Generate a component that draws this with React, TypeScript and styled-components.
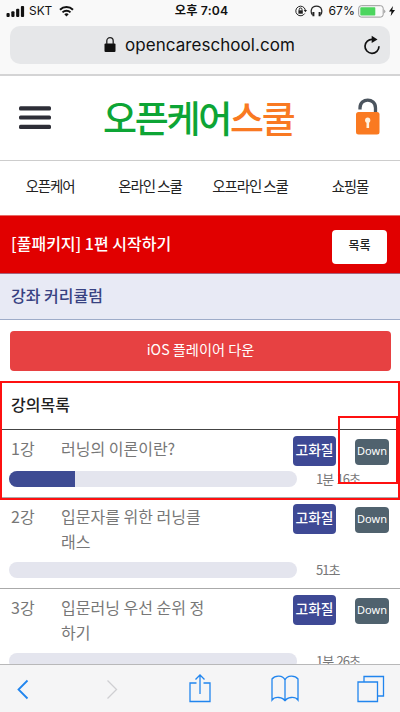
import React from 'react';
import styled, { createGlobalStyle } from 'styled-components';

const Global = createGlobalStyle`
  * { box-sizing: border-box; }
  body { margin: 0; background: #fff; font-family: "Noto Sans CJK KR", "Noto Sans", sans-serif; }
`;

const Screen = styled.div`
  width: 400px;
  height: 712px;
  display: flex;
  flex-direction: column;
  overflow: hidden;
  background: #fff;
`;

const StatusBar = styled.div`
  height: 22px;
  flex: none;
  display: grid;
  grid-template-columns: 1fr auto 1fr;
  align-items: center;
  padding: 0 5px 0 6px;
  background: #f9f9f9;
  color: #111;
  font: 400 11.4px/22px Inter, "Noto Sans CJK KR", sans-serif;
`;

const StatusGroup = styled.div<{ $end?: boolean }>`
  display: flex;
  align-items: center;
  gap: ${(p) => (p.$end ? 3 : 4)}px;
  justify-content: ${(p) => (p.$end ? 'flex-end' : 'flex-start')};
  svg { display: block; flex: none; }
`;

const Carrier = styled.span`
  margin-right: 3px;
  font-size: 11.9px;
`;

const Percent = styled.span`
  margin-left: 3px;
  font-size: 12.2px;
`;

const Clock = styled.div`
  font-weight: 600;
  font-size: 12.2px;
  letter-spacing: 0.2px;
  padding-left: 2px;
`;

const AddressBar = styled.div`
  height: 54px;
  flex: none;
  padding: 4px 10px 0;
  background: #f9f9f9;
  border-bottom: 2px solid #d4d4d5;
`;

const AddressField = styled.div`
  height: 38px;
  display: flex;
  align-items: center;
  padding: 0 9px 0 94px;
  border-radius: 10px;
  background: #e6e7e9;
  svg { display: block; flex: none; }
`;

const Address = styled.span`
  flex: 1;
  margin-left: 9px;
  color: #111;
  font: 400 17px/38px Inter, sans-serif;
  letter-spacing: 0.05px;
`;

const SiteHeader = styled.header`
  height: 85px;
  flex: none;
  display: flex;
  align-items: center;
  padding: 0 20px 0 19px;
  border-bottom: 1px solid #cdcdcd;
  svg { display: block; flex: none; }
`;

const Logo = styled.h1`
  margin: 0 auto 3px 52px;
  font-size: 37px;
  line-height: 60px;
  font-weight: 500;
  letter-spacing: -2.3px;
  color: #0da535;
  white-space: nowrap;
`;

const LogoAccent = styled.span`
  color: #f97922;
`;

const Nav = styled.nav`
  height: 54px;
  flex: none;
  display: grid;
  grid-template-columns: repeat(4, 100px);
  line-height: 50px;
  font-size: 14.5px;
  letter-spacing: -1.1px;
  text-align: center;
  color: #222;
  white-space: nowrap;
`;

const TitleBar = styled.div`
  height: 59px;
  flex: none;
  display: flex;
  align-items: center;
  justify-content: space-between;
  padding: 4px 13px 0 11px;
  background: #e10000;
  border-top: 1px solid #e86a66;
  border-bottom: 1px solid #a5637c;
  color: #fff;
`;

const CourseTitle = styled.h2`
  margin: 0 0 7px;
  font-size: 16px;
  line-height: 24px;
  font-weight: 500;
  letter-spacing: 0;
`;

const ListButton = styled.button`
  width: 55px;
  height: 34px;
  padding: 0 0 3px;
  border: 0;
  border-radius: 4px;
  background: #fff;
  color: #222;
  font: 500 12px/30px "Noto Sans CJK KR", sans-serif;
`;

const SectionTitle = styled.h3`
  margin: 0;
  height: 46px;
  flex: none;
  padding: 0 11px;
  background: #e8eaf5;
  border-bottom: 1px solid #9eacc9;
  color: #384282;
  font-size: 16px;
  font-weight: 500;
  line-height: 43px;
`;

const PlayerButton = styled.button`
  margin: 11px 9px 10px 10px;
  height: 40px;
  flex: none;
  border: 0;
  border-radius: 4px;
  padding: 0 0 4px;
  background: #e74142;
  color: #fff;
  font: 400 14.2px/36px "Noto Sans CJK KR", sans-serif;
`;

const Lessons = styled.section`
  position: relative;
  flex: 1;
  min-height: 0;
  overflow: hidden;
`;

const Highlight = styled.div`
  position: absolute;
  top: 0;
  left: 0;
  width: 400px;
  height: 119px;
  border: 2px solid #fe1010;
`;

const DownHighlight = styled(Highlight)`
  top: 35px;
  left: 338px;
  width: 60px;
  height: 68px;
`;

const ListHeading = styled.h3`
  margin: 0;
  height: 49px;
  padding: 0 11px;
  border-bottom: 1px solid #444;
  color: #222;
  font-size: 16px;
  font-weight: 500;
  line-height: 46px;
`;

const Lesson = styled.article<{ $height: number }>`
  height: ${(p) => p.$height}px;
  display: flex;
  flex-direction: column;
  justify-content: space-between;
  padding: 6px 11px 10px 9px;
  border-bottom: 1px solid #aaa;
  color: #777;
`;

const LessonTop = styled.div`
  display: grid;
  grid-template-columns: 50px 232px 62px 34px;
  padding-left: 2px;
  align-items: start;
  font-size: 16px;
  line-height: 25px;
`;

const LessonText = styled.span`
  white-space: pre;
`;

const Quality = styled.button`
  width: 43px;
  height: 30px;
  padding: 0 0 4px;
  border: 0;
  border-radius: 4px;
  background: #3e4995;
  color: #fff;
  font: 500 13.8px/26px "Noto Sans CJK KR", sans-serif;
`;

const Down = styled.button`
  margin-top: 3px;
  width: 34px;
  height: 26px;
  padding: 0 0 3px;
  border: 0;
  border-radius: 4px;
  background: #50626e;
  color: #fff;
  font: 400 11px/23px "Noto Sans", sans-serif;
`;

const LessonBottom = styled.div`
  display: flex;
  align-items: center;
  height: 16px;
`;

const Track = styled.div`
  width: 288px;
  height: 16px;
  border-radius: 8px;
  overflow: hidden;
  background: #e4e5ee;
`;

const Fill = styled.div`
  height: 100%;
  background: #3e4b93;
`;

const Duration = styled.span`
  margin-left: 19px;
  font-size: 13px;
  line-height: 16px;
  letter-spacing: -1px;
  word-spacing: 1.5px;
  white-space: nowrap;
`;

const Toolbar = styled.footer`
  height: 48px;
  flex: none;
  display: grid;
  grid-template-columns: 46px 132px 43px 128px 43px;
  align-items: center;
  justify-items: center;
  border-top: 1px solid #b8b8b9;
  background: #f5f5f6;
  svg { display: block; fill: none; stroke: #2185ee; stroke-width: 1.3; }
`;

const Signal = () => (
  <svg width="19" height="12" viewBox="0 0 19 12" fill="#111">
    <rect x="0.5" y="8" width="3.2" height="4" rx="1" />
    <rect x="5.3" y="6.3" width="3.2" height="5.7" rx="1" />
    <rect x="10.1" y="3.8" width="3.2" height="8.2" rx="1" />
    <rect x="14.9" y="1" width="3.2" height="11" rx="1" />
  </svg>
);

const Wifi = () => (
  <svg width="15" height="12" viewBox="0 0 15 12" fill="none" stroke="#111" strokeWidth="2">
    <path d="M1 4.7a9.3 9.3 0 0 1 13 0M3.5 7.4a5.8 5.8 0 0 1 8 0" />
    <path d="M5.3 9.2a3.2 3.2 0 0 1 4.4 0L7.5 11.5z" fill="#111" stroke="none" />
  </svg>
);

const RotationLock = () => (
  <svg width="12" height="12" viewBox="0 0 12 12" fill="none" stroke="#222">
    <path d="M9.7 8.5A4.8 4.8 0 1 1 10.3 5" />
    <path d="M8.7 5h3.3l-1.6 2.2z" fill="#222" stroke="none" />
    <rect x="3.4" y="5.3" width="4.4" height="3.4" fill="#222" stroke="none" />
    <path d="M4.2 5.5V4.4a1.4 1.4 0 0 1 2.8 0v1.1" />
  </svg>
);

const Headphones = () => (
  <svg width="13" height="12" viewBox="0 0 13 12" fill="none" stroke="#222">
    <path d="M2.4 9.8C.2 7 .8 1.200 6.5 1.200s6.300 5.800 4.100 8.600" strokeWidth="1.2" />
    <path d="M3.400 7v4.300M9.600 7v4.300" strokeWidth="2" />
  </svg>
);

const Battery = () => (
  <svg width="28" height="13" viewBox="0 0 28 13">
    <rect x="0.7" y="0.7" width="24.5" height="11.4" rx="2.6" fill="#fafafa" stroke="#999" />
    <rect x="2.3" y="2.3" width="15" height="8.2" rx="0.7" fill="#4cd55e" />
    <path d="M26.3 4.5q2 1.900 0 3.800z" fill="#888" />
  </svg>
);

const Bolt = () => (
  <svg width="6" height="10" viewBox="0 0 6 10">
    <path d="M4 0 0 5.500h2.500L1.700 10 6 4H3.300z" fill="#111" />
  </svg>
);

const AddressLock = () => (
  <svg width="12" height="16" viewBox="0 0 12 16">
    <rect x="0.5" y="6.5" width="11" height="8.5" rx="1" fill="#111" />
    <path d="M2.800 7V3.900a3.200 3.200 0 0 1 6.400 0V7" fill="none" stroke="#222" strokeWidth="1.3" />
  </svg>
);

const Reload = () => (
  <svg width="18" height="20" viewBox="0 0 18 20">
    <path d="M9.500 4.300A7 7 0 1 0 16 11.300" fill="none" stroke="#111" strokeWidth="1.7" />
    <path d="M8.700.8 14.500 4.400 8.700 8z" fill="#111" />
  </svg>
);

const Menu = () => (
  <svg width="32" height="24" viewBox="0 0 32 24" fill="#2d2e37">
    <rect width="32" height="4.2" rx="1.5" y="0.2" />
    <rect width="32" height="4.2" rx="1.5" y="9.4" />
    <rect width="32" height="4.2" rx="1.5" y="18.7" />
  </svg>
);

const OpenLock = () => (
  <svg width="25" height="40" viewBox="0 0 25 40">
    <path d="M5 11.500V10c0-10.500 15.500-10.500 15.500 0v6" fill="none" stroke="#4b545e" strokeWidth="3.3" />
    <rect x="1" y="14" width="23.5" height="22.4" rx="2.5" fill="#fa7a21" />
    <circle cx="12.7" cy="22.2" r="2.6" fill="#fff2df" />
    <path d="M11.500 23h2.600v7h-2.600z" fill="#fff2df" />
  </svg>
);

type LessonData = {
  no: string;
  title: string;
  duration: string;
  progress: number;
  height: number;
};

const lessons: LessonData[] = [
  { no: '1강', title: '러닝의 이론이란?', duration: '1분 16초', progress: 23, height: 68 },
  { no: '2강', title: '입문자를 위한 러닝클\n래스', duration: '51초', progress: 0, height: 91 },
  { no: '3강', title: '입문러닝 우선 순위 정\n하기', duration: '1분 26초', progress: 0, height: 91 },
];

export default function App() {
  return (
    <Screen>
      <Global />
      <StatusBar>
        <StatusGroup>
          <Signal />
          <Carrier>SKT</Carrier>
          <Wifi />
        </StatusGroup>
        <Clock>오후 7:04</Clock>
        <StatusGroup $end>
          <RotationLock />
          <Headphones />
          <Percent>67%</Percent>
          <Battery />
          <Bolt />
        </StatusGroup>
      </StatusBar>
      <AddressBar>
        <AddressField>
          <AddressLock />
          <Address>opencareschool.com</Address>
          <Reload />
        </AddressField>
      </AddressBar>
      <SiteHeader>
        <Menu />
        <Logo>
          오픈케어<LogoAccent>스쿨</LogoAccent>
        </Logo>
        <OpenLock />
      </SiteHeader>
      <Nav>
        <span>오픈케어</span>
        <span>온라인 스쿨</span>
        <span>오프라인 스쿨</span>
        <span>쇼핑몰</span>
      </Nav>
      <TitleBar>
        <CourseTitle>[풀패키지] 1편 시작하기</CourseTitle>
        <ListButton>목록</ListButton>
      </TitleBar>
      <SectionTitle>강좌 커리큘럼</SectionTitle>
      <PlayerButton>iOS 플레이어 다운</PlayerButton>
      <Lessons>
        <ListHeading>강의목록</ListHeading>
        {lessons.map((l) => (
          <Lesson key={l.no} $height={l.height}>
            <LessonTop>
              <LessonText>{l.no}</LessonText>
              <LessonText>{l.title}</LessonText>
              <Quality>고화질</Quality>
              <Down>Down</Down>
            </LessonTop>
            <LessonBottom>
              <Track>
                <Fill style={{ width: `${l.progress}%` }} />
              </Track>
              <Duration>{l.duration}</Duration>
            </LessonBottom>
          </Lesson>
        ))}
        <Highlight />
        <DownHighlight />
      </Lessons>
      <Toolbar>
        <svg width="14" height="22" viewBox="0 0 14 22">
          <path d="M11.500 2.500 2.500 11.500l9 9" style={{ strokeWidth: 1.8 }} />
        </svg>
        <svg width="14" height="22" viewBox="0 0 14 22">
          <path d="m2.500 2.500 9 9-9 9" style={{ stroke: '#cfcfd2' }} />
        </svg>
        <svg width="22" height="30" viewBox="0 0 22 30">
          <path d="M7.500 9H1v18.500h20V9h-6.500M11 20V1M6.500 5.500 11 1l4.500 4.500" />
        </svg>
        <svg width="28" height="28" viewBox="0 0 28 28">
          <path d="M14 5v21C12 22 4 21 1 25V4c3-4 11-4 13 1 2-5 10-5 13-1v21c-3-4-11-3-13 1" />
        </svg>
        <svg width="28" height="28" viewBox="0 0 28 28">
          <path d="M1 7h19.500v19.500H1zM7 7V1.500h19.500V21h-6" />
        </svg>
      </Toolbar>
    </Screen>
  );
}
